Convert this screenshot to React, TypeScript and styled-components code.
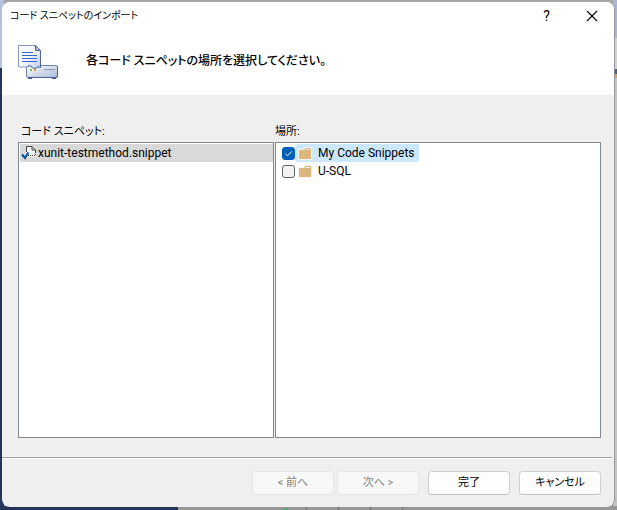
import React, { useState } from "react";
import styled, { createGlobalStyle } from "styled-components";

const GlobalStyle = createGlobalStyle`
  *, *::before, *::after { box-sizing: border-box; }
  body {
    margin: 0;
    color: #000;
    font: 12px/18px Roboto, "Noto Sans CJK JP", sans-serif;
    font-feature-settings: "palt";
  }
  button, input { font: inherit; font-feature-settings: inherit; }
`;

const Desktop = styled.div`
  display: flex;
  min-height: 100vh;
  padding: 2px 2px 3px;
  background:
    linear-gradient(#27345a, #27345a) left bottom / 178px 4px no-repeat,
    linear-gradient(#5fa869, #5fa869) 284px 100% / 4px 2px no-repeat,
    repeating-linear-gradient(90deg, #6c6c6c 0 1px, #989898 1px 32px) 306px 100% / 98px 3px no-repeat,
    linear-gradient(#969696, #969696) left bottom / 100% 4px no-repeat,
    linear-gradient(#b5c0dc 0 68px, #27345a 68px) left top / 4px 100% no-repeat,
    linear-gradient(#a9b6d6 0 38px, #d2d2d2 38px 69px, #4a5c8c 69px 74px, #d5a256 74px 78px, #c4c4c4 78px) right top / 4px 100% no-repeat,
    #a6a6a6;
`;

const Dialog = styled.main`
  display: flex;
  flex: 1;
  flex-direction: column;
  min-width: 0;
  background: #efefef;
  border-right: 1px solid #96989c;
  border-radius: 8px;
  overflow: hidden;
`;

const Header = styled.header`
  height: 93px;
  background: #fff;
`;

const TitleBar = styled.div`
  display: flex;
  align-items: center;
  height: 28px;
  padding: 0 0 0 8px;
`;

const Title = styled.h1`
  flex: 1;
  margin: 0;
  font-size: 10px;
  font-weight: 400;
`;

const CaptionButton = styled.button`
  display: flex;
  align-items: center;
  justify-content: center;
  width: 45px;
  height: 28px;
  padding: 0;
  border: 0;
  background: transparent;
  color: #000;
  font-size: 14px;
`;

const Banner = styled.div`
  display: flex;
  align-items: center;
  gap: 27px;
  height: 65px;
  padding-left: 16px;
`;

const Instruction = styled.p`
  margin: 0 0 4px;
  font-size: 12px;
  font-weight: 500;
`;

const Content = styled.div`
  display: grid;
  flex: 1;
  grid-template-columns: 256fr 326fr;
  column-gap: 1px;
  padding: 28px 13px 19px 16px;
`;

const Column = styled.section`
  display: flex;
  flex-direction: column;
  min-width: 0;
`;

const ColumnLabel = styled.h2<{ $flush?: boolean }>`
  height: 19px;
  margin: 0;
  padding-left: ${(p) => (p.$flush ? "0" : "3px")};
  font-size: 11px;
  font-weight: 400;
  line-height: 18px;
`;

const List = styled.ul<{ $inset?: boolean }>`
  flex: 1;
  margin: 0;
  padding: ${(p) => (p.$inset ? "1px 6px" : "1px 0 1px 1px")};
  border: 1px solid #828790;
  background: #fff;
  list-style: none;
`;

const SnippetRow = styled.button<{ $selected: boolean }>`
  display: flex;
  align-items: center;
  gap: 1px;
  width: 100%;
  height: 18px;
  padding: 0 1px;
  border: 0;
  background: ${(p) => (p.$selected ? "#d9d9d9" : "transparent")};
  color: #000;
  white-space: nowrap;
`;

const LocationRow = styled.label`
  display: flex;
  align-items: center;
  height: 18px;
`;

const TickBox = styled.input`
  appearance: none;
  width: 13px;
  height: 13px;
  margin: 0;
  border: 1px solid #626262;
  border-radius: 3px;
  background: #f3f3f3;

  &:checked {
    border-color: #005fb8;
    background: #005fb8 url("data:image/svg+xml,%3Csvg xmlns='http://www.w3.org/2000/svg' viewBox='0 0 11 11'%3E%3Cpath d='M2.5 5.7l2 2L8.7 3.5' fill='none' stroke='white'/%3E%3C/svg%3E") center / 11px no-repeat;
  }
`;

const LocationName = styled.span<{ $selected: boolean }>`
  display: flex;
  align-items: center;
  gap: 6px;
  height: 18px;
  padding: 0 4px 0 3px;
  border-radius: 2px;
  background: ${(p) => (p.$selected ? "#cce8ff" : "transparent")};
  white-space: nowrap;
`;

const Divider = styled.hr`
  width: calc(100% - 2px);
  height: 2px;
  margin: 0;
  border: 0;
  border-top: 1px solid #a0a0a0;
  border-bottom: 1px solid #fff;
`;

const Footer = styled.footer`
  display: flex;
  justify-content: flex-end;
  gap: 9px;
  padding: 12px 13px 12px;
`;

const Steps = styled.div`
  display: flex;
  gap: 3px;
`;

const PushButton = styled.button`
  width: 82px;
  height: 24px;
  padding: 0;
  border: 1px solid #d0d0d0;
  border-bottom-color: #c2c2c2;
  border-radius: 4px;
  background: #fdfdfd;
  color: #000;
  font-size: 11px;
  line-height: 18px;

  &:disabled {
    border-color: #e5e5e5;
    background: #f8f8f8;
    color: #838383;
  }
`;

function ImportIcon() {
  return (
    <svg width="41" height="36" viewBox="0 0 41 36" aria-hidden="true">
      <defs>
        <linearGradient id="paper" x2="1" y2="1">
          <stop stopColor="#fff" />
          <stop offset=".5" stopColor="#f2f5fb" />
          <stop offset="1" stopColor="#b9c8e6" />
        </linearGradient>
        <linearGradient id="drive" x2="1" y2="1">
          <stop stopColor="#fff" />
          <stop offset="1" stopColor="#a9b8dc" />
        </linearGradient>
      </defs>
      <path d="M10 32h4v2h-4zM34 32h4v2h-4z" fill="#4d628c" />
      <rect x="8.500" y="20.500" width="31" height="12" rx="1.500" fill="url(#drive)" stroke="#7184aa" />
      <path d="M39.500 22v9q0 1.500-1.500 1.500H10" fill="none" stroke="#4d628c" />
      <path d="M26 24.500h11" stroke="#8b97b1" />
      <path d="M.5.5h17l5 5v17c-3-2-5 2-7 1-3-3-4-3-6-2-2 1-2 1-4 0l-2 1-3-1z" fill="url(#paper)" stroke="#8497bd" />
      <path d="M17.500.5l5 5h-5z" fill="#b6bfd4" stroke="#53658c" />
      <path d="M22.500 6v16.500c-3-2-5 2-7 1-3-3-4-3-6-2" fill="none" stroke="#536993" />
      <path d="M4 7.500h11M4 10.500h15M4 13.500h15M4 16.500h15" stroke="#376bd0" />
      <path d="M12 24h2v2h-2z" fill="#6fc05b" />
      <path d="M16 24h2v2h-2z" fill="#f0a52c" />
    </svg>
  );
}

function SnippetIcon() {
  return (
    <svg width="16" height="16" viewBox="0 0 16 16" aria-hidden="true">
      <path d="M5 1h7l3 3v8H5z" fill="#f4f4f4" />
      <path d="M5.500 7V1.500h5.500l3.500 3.500v3M11 1.500V5h3.500" fill="none" stroke="#424242" />
      <path d="M7 10.500h8M14.500 7v4" fill="none" stroke="#424242" strokeDasharray="1 1" />
      <path d="M1 9.500l3 3.500L7.500 7.500" fill="none" stroke="#00539c" strokeWidth="2.200" />
    </svg>
  );
}

function FolderIcon() {
  return (
    <svg width="14" height="13" viewBox="0 0 14 13" aria-hidden="true">
      <path d="M0 2h5l1-2h8v13H0z" fill="#f6f6f6" />
      <path d="M1 3h5l1-2h6v11H1z" fill="#dcb67a" />
      <path d="M7.500 2.500H12" stroke="#fff8ea" />
    </svg>
  );
}

const snippets = ["xunit-testmethod.snippet"];
const places = ["My Code Snippets", "U-SQL"];

export default function App() {
  const [snippet, setSnippet] = useState(snippets[0]);
  const [checked, setChecked] = useState<string[]>([places[0]]);

  const toggle = (place: string) =>
    setChecked((now) => (now.includes(place) ? now.filter((p) => p !== place) : [...now, place]));

  return (
    <>
      <GlobalStyle />
      <Desktop>
        <Dialog>
          <Header>
            <TitleBar>
              <Title>コード スニペットのインポート</Title>
              <CaptionButton aria-label="ヘルプ">?</CaptionButton>
              <CaptionButton aria-label="閉じる">
                <svg width="12" height="12" viewBox="0 0 12 12" aria-hidden="true">
                  <path d="M1 1l10 10M11 1L1 11" stroke="#000" strokeWidth="1.100" />
                </svg>
              </CaptionButton>
            </TitleBar>
            <Banner>
              <ImportIcon />
              <Instruction>各コード スニペットの場所を選択してください。</Instruction>
            </Banner>
          </Header>
          <Content>
            <Column>
              <ColumnLabel id="snippets-label">コード スニペット:</ColumnLabel>
              <List aria-labelledby="snippets-label">
                {snippets.map((name) => (
                  <li key={name}>
                    <SnippetRow $selected={name === snippet} onClick={() => setSnippet(name)}>
                      <SnippetIcon />
                      {name}
                    </SnippetRow>
                  </li>
                ))}
              </List>
            </Column>
            <Column>
              <ColumnLabel $flush id="places-label">場所:</ColumnLabel>
              <List $inset aria-labelledby="places-label">
                {places.map((place, i) => (
                  <li key={place}>
                    <LocationRow>
                      <TickBox type="checkbox" checked={checked.includes(place)} onChange={() => toggle(place)} />
                      <LocationName $selected={i === 0}>
                        <FolderIcon />
                        {place}
                      </LocationName>
                    </LocationRow>
                  </li>
                ))}
              </List>
            </Column>
          </Content>
          <Divider />
          <Footer>
            <Steps>
              <PushButton disabled>&lt; 前へ</PushButton>
              <PushButton disabled>次へ &gt;</PushButton>
            </Steps>
            <PushButton>完了</PushButton>
            <PushButton>キャンセル</PushButton>
          </Footer>
        </Dialog>
      </Desktop>
    </>
  );
}
